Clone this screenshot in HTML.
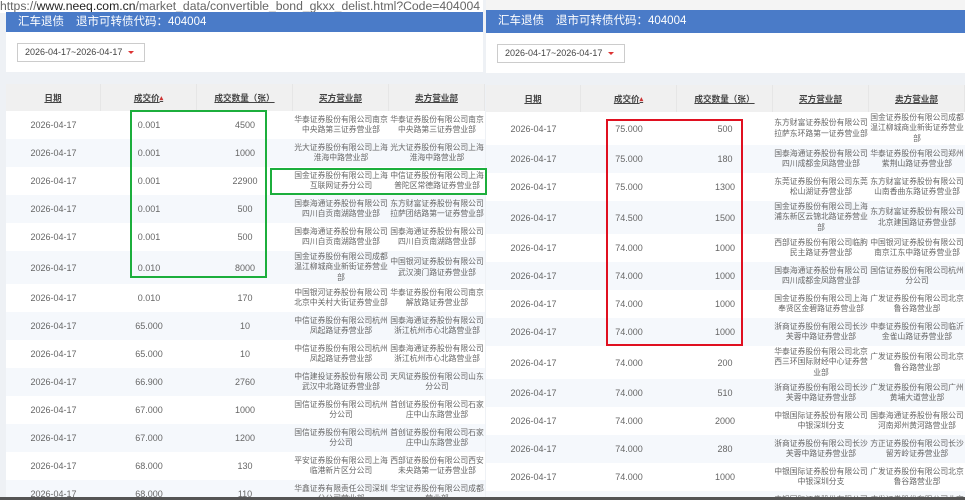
<!DOCTYPE html>
<html><head><meta charset="utf-8">
<style>
*{margin:0;padding:0;box-sizing:border-box}
html,body{width:965px;height:500px;overflow:hidden}
body{background:#eef1f5;font-family:"Liberation Sans","Noto Sans CJK SC",sans-serif;position:relative;color:#555}
.url{position:absolute;left:0;top:0;width:483px;height:13px;background:#fff;font-size:12.2px;line-height:12px;color:#666;white-space:nowrap;overflow:hidden}
.url b{color:#222;font-weight:normal}
.topr{position:absolute;left:486px;top:0;width:479px;height:10px;background:#f4f4f4}
.hdr{position:absolute;background:#4a7bc8;color:#fff;font-size:11.5px;line-height:20px;padding-left:12px;white-space:nowrap}
.hdr span{margin-left:12px}
.fbox{position:absolute;background:#fff}
.sel{position:absolute;border:1px solid #ccc;background:#fff;font-size:9px;color:#444;line-height:17px;padding-left:7px;width:128px;height:19px}
.sel i{position:absolute;right:10px;top:7px;width:0;height:0;border-left:3px solid transparent;border-right:3px solid transparent;border-top:3px solid #d33}
.tb{position:absolute;width:479px}
.r{display:flex;overflow:hidden}
.r>div{flex:0 0 auto;display:flex;align-items:center;justify-content:center;text-align:center;overflow:hidden;color:#666;font-size:9px}
.r>div.b{font-size:7.8px;line-height:10.5px;letter-spacing:0;padding:0}
.r>div.b span{display:block;width:97px}
.h>div{background:#f0f0f0;font-weight:bold;color:#444;text-decoration:underline;font-size:8.6px;border-right:1px solid #e6e6e6;height:27px}
.s>div{background:#f5f8fc}
.w>div{background:#fff}
.c1{width:95px}.c2{width:96px}.c3{width:96px}.c4{width:96px}.c5{width:96px}
.ar{color:#c33;font-size:7px;text-decoration:none}
.box{position:absolute;border:2px solid}
</style></head><body>
<div class="url">https://<b>www.neeq.com.cn</b>/market_data/convertible_bond_gkxx_delist.html?Code=404004</div>
<div class="topr"></div>

<div class="hdr" style="left:6px;top:12px;width:477px;height:20px">汇车退债<span>退市可转债代码：404004</span></div>
<div class="fbox" style="left:6px;top:32px;width:477px;height:40px"></div>
<div class="sel" style="left:17px;top:43px">2026-04-17~2026-04-17<i></i></div>

<div class="tb" style="left:6px;top:84px">
<div class="r h"><div class="c1">日期</div><div class="c2">成交价<span class="ar">▴</span></div><div class="c3">成交数量（张）</div><div class="c4">买方营业部</div><div class="c5">卖方营业部</div></div>
<div class="r w" style="height:28px"><div class="c1">2026-04-17</div><div class="c2">0.001</div><div class="c3">4500</div><div class="c4 b">华泰证券股份有限公司南京中央路第三证券营业部</div><div class="c5 b">华泰证券股份有限公司南京中央路第三证券营业部</div></div>
<div class="r s" style="height:28px"><div class="c1">2026-04-17</div><div class="c2">0.001</div><div class="c3">1000</div><div class="c4 b">光大证券股份有限公司上海淮海中路营业部</div><div class="c5 b">光大证券股份有限公司上海淮海中路营业部</div></div>
<div class="r w" style="height:28px"><div class="c1">2026-04-17</div><div class="c2">0.001</div><div class="c3">22900</div><div class="c4 b">国金证券股份有限公司上海互联网证券分公司</div><div class="c5 b">中信证券股份有限公司上海普陀区常德路证券营业部</div></div>
<div class="r s" style="height:28px"><div class="c1">2026-04-17</div><div class="c2">0.001</div><div class="c3">500</div><div class="c4 b">国泰海通证券股份有限公司四川自贡南湖路营业部</div><div class="c5 b">东方财富证券股份有限公司拉萨团结路第一证券营业部</div></div>
<div class="r w" style="height:28px"><div class="c1">2026-04-17</div><div class="c2">0.001</div><div class="c3">500</div><div class="c4 b">国泰海通证券股份有限公司四川自贡南湖路营业部</div><div class="c5 b">国泰海通证券股份有限公司四川自贡南湖路营业部</div></div>
<div class="r s" style="height:33px"><div class="c1">2026-04-17</div><div class="c2">0.010</div><div class="c3">8000</div><div class="c4 b">国金证券股份有限公司成都温江柳城商业新街证券营业部</div><div class="c5 b">中国银河证券股份有限公司武汉澳门路证券营业部</div></div>
<div class="r w" style="height:28px"><div class="c1">2026-04-17</div><div class="c2">0.010</div><div class="c3">170</div><div class="c4 b">中国银河证券股份有限公司北京中关村大街证券营业部</div><div class="c5 b">华泰证券股份有限公司南京解放路证券营业部</div></div>
<div class="r s" style="height:28px"><div class="c1">2026-04-17</div><div class="c2">65.000</div><div class="c3">10</div><div class="c4 b">中信证券股份有限公司杭州凤起路证券营业部</div><div class="c5 b">国泰海通证券股份有限公司浙江杭州市心北路营业部</div></div>
<div class="r w" style="height:28px"><div class="c1">2026-04-17</div><div class="c2">65.000</div><div class="c3">10</div><div class="c4 b">中信证券股份有限公司杭州凤起路证券营业部</div><div class="c5 b">国泰海通证券股份有限公司浙江杭州市心北路营业部</div></div>
<div class="r s" style="height:28px"><div class="c1">2026-04-17</div><div class="c2">66.900</div><div class="c3">2760</div><div class="c4 b">中信建投证券股份有限公司武汉中北路证券营业部</div><div class="c5 b">天风证券股份有限公司山东分公司</div></div>
<div class="r w" style="height:28px"><div class="c1">2026-04-17</div><div class="c2">67.000</div><div class="c3">1000</div><div class="c4 b">国信证券股份有限公司杭州分公司</div><div class="c5 b">首创证券股份有限公司石家庄中山东路营业部</div></div>
<div class="r s" style="height:28px"><div class="c1">2026-04-17</div><div class="c2">67.000</div><div class="c3">1200</div><div class="c4 b">国信证券股份有限公司杭州分公司</div><div class="c5 b">首创证券股份有限公司石家庄中山东路营业部</div></div>
<div class="r w" style="height:28px"><div class="c1">2026-04-17</div><div class="c2">68.000</div><div class="c3">130</div><div class="c4 b">平安证券股份有限公司上海临港新片区分公司</div><div class="c5 b">西部证券股份有限公司西安未央路第一证券营业部</div></div>
<div class="r s" style="height:28px"><div class="c1">2026-04-17</div><div class="c2">68.000</div><div class="c3">110</div><div class="c4 b">华鑫证券有限责任公司深圳分公司营业部</div><div class="c5 b">华宝证券股份有限公司成都营业部</div></div>
</div>

<div class="hdr" style="left:486px;top:10px;width:479px;height:23px;line-height:22px">汇车退债<span>退市可转债代码：404004</span></div>
<div class="fbox" style="left:486px;top:33px;width:479px;height:40px"></div>
<div class="sel" style="left:497px;top:44px">2026-04-17~2026-04-17<i></i></div>

<div class="tb" style="left:486px;top:85px">
<div class="r h"><div class="c1">日期</div><div class="c2">成交价<span class="ar">▴</span></div><div class="c3">成交数量（张）</div><div class="c4">买方营业部</div><div class="c5">卖方营业部</div></div>
<div class="r w" style="height:33px"><div class="c1">2026-04-17</div><div class="c2">75.000</div><div class="c3">500</div><div class="c4 b">东方财富证券股份有限公司拉萨东环路第一证券营业部</div><div class="c5 b">国金证券股份有限公司成都温江柳城商业新街证券营业部</div></div>
<div class="r s" style="height:28px"><div class="c1">2026-04-17</div><div class="c2">75.000</div><div class="c3">180</div><div class="c4 b">国泰海通证券股份有限公司四川成都金凤路营业部</div><div class="c5 b">华泰证券股份有限公司郑州紫荆山路证券营业部</div></div>
<div class="r w" style="height:28px"><div class="c1">2026-04-17</div><div class="c2">75.000</div><div class="c3">1300</div><div class="c4 b">东莞证券股份有限公司东莞松山湖证券营业部</div><div class="c5 b">东方财富证券股份有限公司山南香曲东路证券营业部</div></div>
<div class="r s" style="height:33px"><div class="c1">2026-04-17</div><div class="c2">74.500</div><div class="c3">1500</div><div class="c4 b">国金证券股份有限公司上海浦东新区云锦北路证券营业部</div><div class="c5 b">东方财富证券股份有限公司北京建国路证券营业部</div></div>
<div class="r w" style="height:28px"><div class="c1">2026-04-17</div><div class="c2">74.000</div><div class="c3">1000</div><div class="c4 b">西部证券股份有限公司临朐民主路证券营业部</div><div class="c5 b">中国银河证券股份有限公司南京江东中路证券营业部</div></div>
<div class="r s" style="height:28px"><div class="c1">2026-04-17</div><div class="c2">74.000</div><div class="c3">1000</div><div class="c4 b">国泰海通证券股份有限公司四川成都金凤路营业部</div><div class="c5 b">国信证券股份有限公司杭州分公司</div></div>
<div class="r w" style="height:28px"><div class="c1">2026-04-17</div><div class="c2">74.000</div><div class="c3">1000</div><div class="c4 b">国金证券股份有限公司上海奉贤区金碧路证券营业部</div><div class="c5 b">广发证券股份有限公司北京鲁谷路营业部</div></div>
<div class="r s" style="height:28px"><div class="c1">2026-04-17</div><div class="c2">74.000</div><div class="c3">1000</div><div class="c4 b">浙商证券股份有限公司长沙芙蓉中路证券营业部</div><div class="c5 b">中泰证券股份有限公司临沂金雀山路证券营业部</div></div>
<div class="r w" style="height:33px"><div class="c1">2026-04-17</div><div class="c2">74.000</div><div class="c3">200</div><div class="c4 b">华泰证券股份有限公司北京西三环国际财经中心证券营业部</div><div class="c5 b">广发证券股份有限公司北京鲁谷路营业部</div></div>
<div class="r s" style="height:28px"><div class="c1">2026-04-17</div><div class="c2">74.000</div><div class="c3">510</div><div class="c4 b">浙商证券股份有限公司长沙芙蓉中路证券营业部</div><div class="c5 b">广发证券股份有限公司广州黄埔大道营业部</div></div>
<div class="r w" style="height:28px"><div class="c1">2026-04-17</div><div class="c2">74.000</div><div class="c3">2000</div><div class="c4 b">中银国际证券股份有限公司中银深圳分支</div><div class="c5 b">国泰海通证券股份有限公司河南郑州黄河路营业部</div></div>
<div class="r s" style="height:28px"><div class="c1">2026-04-17</div><div class="c2">74.000</div><div class="c3">280</div><div class="c4 b">浙商证券股份有限公司长沙芙蓉中路证券营业部</div><div class="c5 b">方正证券股份有限公司长沙留芳岭证券营业部</div></div>
<div class="r w" style="height:28px"><div class="c1">2026-04-17</div><div class="c2">74.000</div><div class="c3">1000</div><div class="c4 b">中银国际证券股份有限公司中银深圳分支</div><div class="c5 b">广发证券股份有限公司北京鲁谷路营业部</div></div>
<div class="r s" style="height:28px"><div class="c1">2026-04-17</div><div class="c2">74.000</div><div class="c3">1000</div><div class="c4 b">中银国际证券股份有限公司中银深圳分支</div><div class="c5 b">广发证券股份有限公司北京鲁谷路营业部</div></div>
</div>

<div class="box" style="left:130px;top:110px;width:137px;height:168px;border-color:#1cae3c"></div>
<div class="box" style="left:270px;top:168px;width:217px;height:27px;border-color:#1cae3c"></div>
<div class="box" style="left:606px;top:119px;width:137px;height:227px;border-color:#e01020"></div>
<div style="position:absolute;left:0;top:497px;width:965px;height:3px;background:#555"></div>
</body></html>
